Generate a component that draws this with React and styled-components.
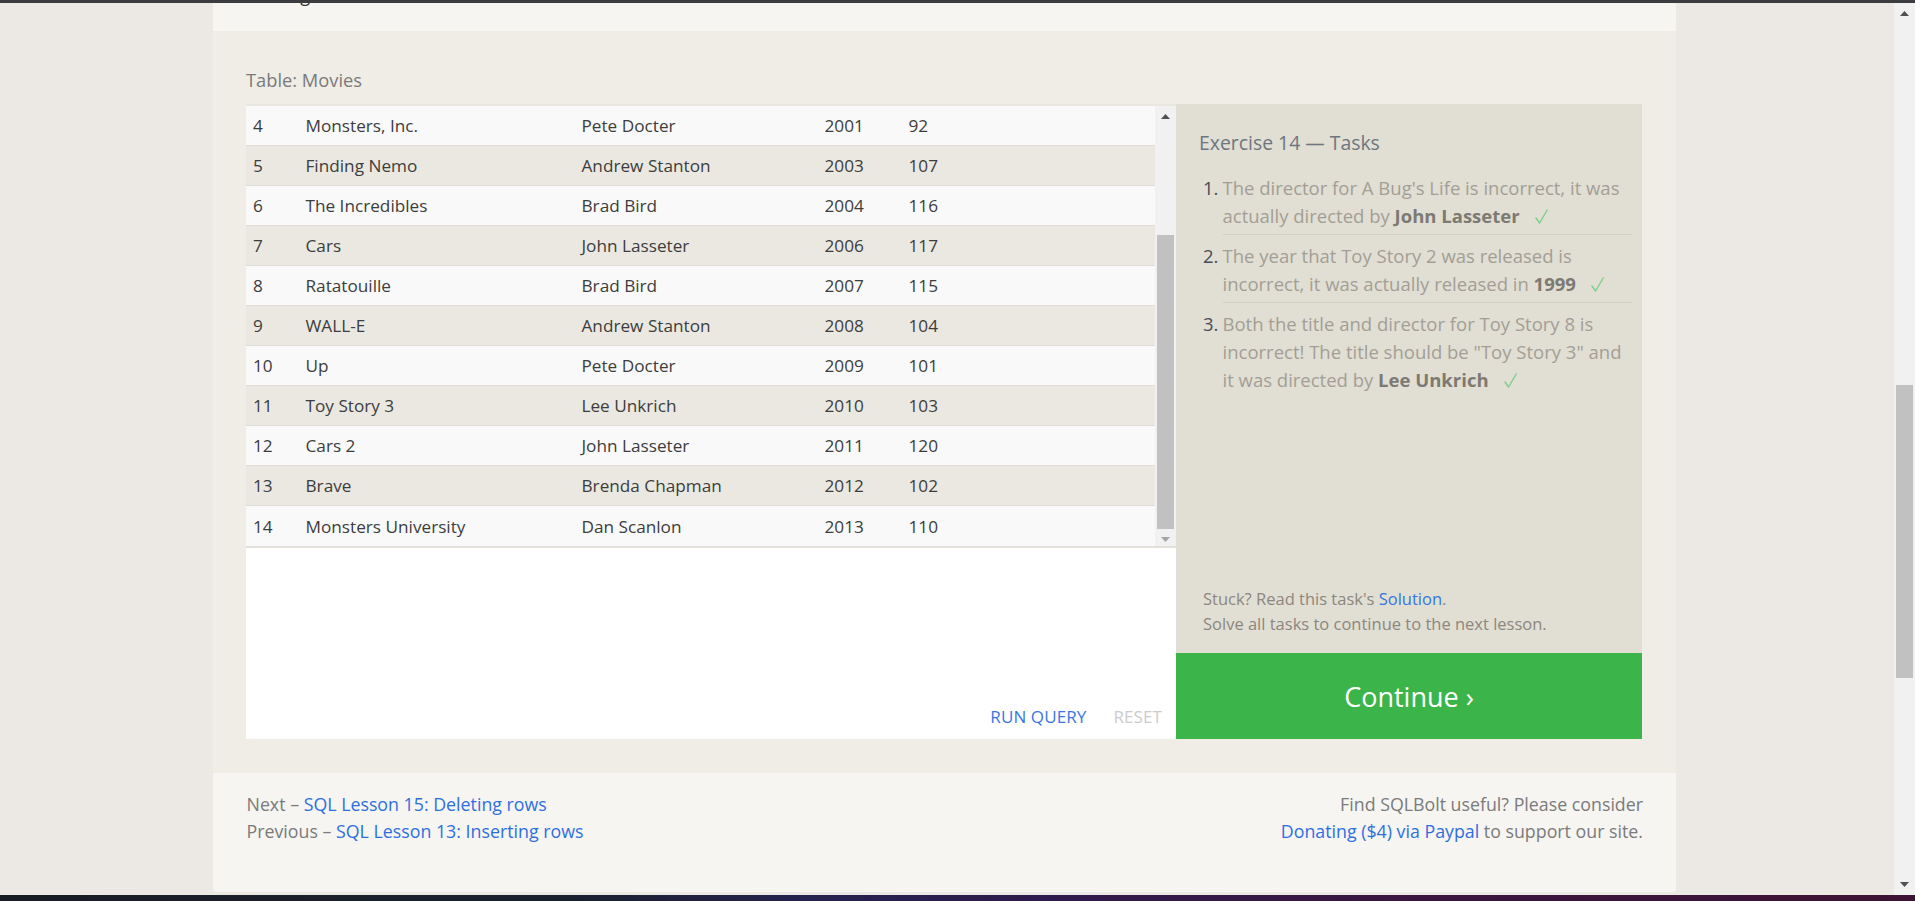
import React from "react";
import styled, { createGlobalStyle } from "styled-components";

const GlobalStyle = createGlobalStyle`
  html, body { margin: 0; padding: 0; overflow: hidden; }
  body { font-family: "Open Sans", "Noto Sans", sans-serif; }
  * { box-sizing: border-box; }
`;

const Screen = styled.div`
  width: 1915px;
  height: 901px;
  display: flex;
  flex-direction: column;
  background: #ece8e4;
`;

const TopBar = styled.div`
  height: 3px;
  background: #3b3c40;
  flex: none;
`;

const Taskbar = styled.div`
  height: 6px;
  flex: none;
  background: linear-gradient(90deg, #181d24 0%, #1a2030 30%, #24224e 42%, #2f1a4c 55%, #3b1540 75%, #3d1234 100%);
`;

const Viewport = styled.div`
  flex: 1;
  display: flex;
  min-height: 0;
`;

const Page = styled.div`
  flex: 1;
  padding-left: 213px;
  overflow: hidden;
  background: #ece8e4;
`;

const Container = styled.div`
  width: 1463px;
  display: flex;
  flex-direction: column;
`;

const LessonTail = styled.div`
  height: 28px;
  background: #f6f5f1;
  overflow: hidden;
  padding-left: 33px;
`;

const CutText = styled.p`
  margin: -22px 0 0;
  font-size: 18px;
  line-height: 28px;
  color: #333;
`;

const Exercise = styled.section`
  height: 742px;
  background: #efede6;
  border-radius: 4px;
  padding: 37px 34px 34px 33px;
  display: flex;
  flex-direction: column;
`;

const TableLabel = styled.div`
  font-size: 18.3px;
  line-height: 24px;
  color: #7a7a7a;
  margin-bottom: 12px;
`;

const Workspace = styled.div`
  display: flex;
  height: 635px;
`;

const Editor = styled.div`
  width: 930px;
  background: #ffffff;
  display: flex;
  flex-direction: column;
`;

const TableScroller = styled.div`
  height: 444px;
  display: flex;
  border-top: 2px solid #e9e7e0;
  border-bottom: 2px solid #e2e0d9;
`;

const Rows = styled.div`
  flex: 1;
  overflow: hidden;
`;

const Row = styled.div`
  display: grid;
  grid-template-columns: 52.5px 276px 243px 84px 1fr;
  align-items: center;
  height: 40px;
  padding-left: 7px;
  border-bottom: 1px solid #dedcd5;
  background: ${(p) => (p.$shade ? "#eae8e1" : "#f9f9f9")};
  font-size: 17.2px;
  color: #3d3d3d;
  &:last-child { border-bottom: none; }
`;

const Cell = styled.span`
  white-space: nowrap;
`;

const ScrollBar = styled.div`
  width: 21px;
  flex: none;
  background: #f1f1f1;
  display: flex;
  flex-direction: column;
`;

const ArrowBtn = styled.div`
  height: 21px;
  flex: none;
  display: flex;
  align-items: center;
  justify-content: center;
`;

const Track = styled.div`
  flex: 1;
  display: flex;
  flex-direction: column;
`;

const Thumb = styled.div`
  margin: ${(p) => p.$offset}px 2px 0;
  height: ${(p) => p.$size}px;
  background: #c1c1c1;
  flex: none;
`;

const Actions = styled.div`
  flex: 1;
  display: flex;
  justify-content: flex-end;
  align-items: flex-end;
  gap: 27px;
  padding: 0 14px 10px 0;
`;

const ActionBtn = styled.span`
  font-size: 17px;
  line-height: 24px;
  color: ${(p) => (p.$disabled ? "#cccccc" : "#3a77e4")};
  letter-spacing: 0.1px;
`;

const TaskPanel = styled.aside`
  width: 466px;
  background: #e1ded3;
  display: flex;
  flex-direction: column;
`;

const TaskContent = styled.div`
  flex: 1;
  padding: 25px 10px 0 23px;
  display: flex;
  flex-direction: column;
`;

const TaskHeading = styled.h3`
  margin: 0;
  font-weight: 400;
  font-size: 19.4px;
  line-height: 28px;
  color: #6d7680;
`;

const TaskList = styled.ol`
  list-style: none;
  margin: 17px 0 0;
  padding: 0 0 0 4px;
`;

const TaskItem = styled.li`
  display: flex;
  margin-top: ${(p) => (p.$sep ? "4px" : "0")};
  font-size: 18.5px;
  line-height: 28px;
`;

const TaskNum = styled.span`
  width: 19.5px;
  flex: none;
  color: #474d59;
  padding-top: ${(p) => (p.$sep ? "8px" : "0")};
`;

const TaskBody = styled.div`
  flex: 1;
  color: #a39e96;
  border-top: ${(p) => (p.$sep ? "1px solid #d2cfc4" : "none")};
  padding-top: ${(p) => (p.$sep ? "7px" : "0")};
`;

const Strong = styled.b`
  color: #7d7973;
  font-weight: 700;
`;

const Check = styled.svg`
  margin-left: 15px;
  vertical-align: -1px;
`;

const Stuck = styled.div`
  padding: 0 10px 17px 27px;
  font-size: 16.5px;
  line-height: 25px;
  color: #8c877f;
`;

const Link = styled.a`
  color: ${(p) => p.$color || "#3776e0"};
  text-decoration: none;
`;

const ContinueBtn = styled.div`
  height: 86px;
  flex: none;
  background: #3bb54a;
  color: #ffffff;
  font-size: 27px;
  display: flex;
  align-items: center;
  justify-content: center;
`;

const Footer = styled.footer`
  height: 119px;
  background: #f6f5f2;
  border-radius: 0 0 4px 4px;
  padding: 18px 33px 0 33.5px;
  display: flex;
  justify-content: space-between;
  font-size: 17.8px;
  line-height: 27px;
  color: #7b7b7b;
`;

const FooterCol = styled.div`
  text-align: ${(p) => (p.$right ? "right" : "left")};
`;

const Triangle = ({ up, color }) => (
  <svg width="9" height="5" viewBox="0 0 9 5">
    <path d={up ? "M0 5 L4.5 0 L9 5 Z" : "M0 0 L4.5 5 L9 0 Z"} fill={color} />
  </svg>
);

const CheckMark = () => (
  <Check width="13" height="15" viewBox="0 0 13 15">
    <path d="M1 9 L4.6 14 L12.2 1" fill="none" stroke="#7ccf89" strokeWidth="1.4" strokeLinecap="round" strokeLinejoin="round" />
  </Check>
);

const movies = [
  [4, "Monsters, Inc.", "Pete Docter", 2001, 92],
  [5, "Finding Nemo", "Andrew Stanton", 2003, 107],
  [6, "The Incredibles", "Brad Bird", 2004, 116],
  [7, "Cars", "John Lasseter", 2006, 117],
  [8, "Ratatouille", "Brad Bird", 2007, 115],
  [9, "WALL-E", "Andrew Stanton", 2008, 104],
  [10, "Up", "Pete Docter", 2009, 101],
  [11, "Toy Story 3", "Lee Unkrich", 2010, 103],
  [12, "Cars 2", "John Lasseter", 2011, 120],
  [13, "Brave", "Brenda Chapman", 2012, 102],
  [14, "Monsters University", "Dan Scanlon", 2013, 110],
];

const tasks = [
  <>The director for A Bug's Life is incorrect, it was actually directed by <Strong>John Lasseter</Strong><CheckMark /></>,
  <>The year that Toy Story 2 was released is incorrect, it was actually released in <Strong>1999</Strong><CheckMark /></>,
  <>Both the title and director for Toy Story 8 is incorrect! The title should be "Toy Story 3" and it was directed by <Strong>Lee Unkrich</Strong><CheckMark /></>,
];

export default function App() {
  return (
    <>
      <GlobalStyle />
      <Screen>
        <TopBar />
        <Viewport>
          <Page>
            <Container>
              <LessonTail>
                <CutText>starting.</CutText>
              </LessonTail>
              <Exercise>
                <TableLabel>Table: Movies</TableLabel>
                <Workspace>
                  <Editor>
                    <TableScroller>
                      <Rows>
                        {movies.map((m, i) => (
                          <Row key={m[0]} $shade={i % 2 === 1}>
                            {m.map((v, j) => (
                              <Cell key={j}>{v}</Cell>
                            ))}
                          </Row>
                        ))}
                      </Rows>
                      <ScrollBar>
                        <ArrowBtn><Triangle up color="#505050" /></ArrowBtn>
                        <Track><Thumb $offset={108} $size={294} /></Track>
                        <ArrowBtn><Triangle color="#a3a3a3" /></ArrowBtn>
                      </ScrollBar>
                    </TableScroller>
                    <Actions>
                      <ActionBtn>RUN QUERY</ActionBtn>
                      <ActionBtn $disabled>RESET</ActionBtn>
                    </Actions>
                  </Editor>
                  <TaskPanel>
                    <TaskContent>
                      <TaskHeading>Exercise 14 — Tasks</TaskHeading>
                      <TaskList>
                        {tasks.map((t, i) => (
                          <TaskItem key={i} $sep={i > 0}>
                            <TaskNum $sep={i > 0}>{i + 1}.</TaskNum>
                            <TaskBody $sep={i > 0}>{t}</TaskBody>
                          </TaskItem>
                        ))}
                      </TaskList>
                    </TaskContent>
                    <Stuck>
                      Stuck? Read this task's <Link href="#">Solution</Link>.
                      <br />
                      Solve all tasks to continue to the next lesson.
                    </Stuck>
                    <ContinueBtn>Continue ›</ContinueBtn>
                  </TaskPanel>
                </Workspace>
              </Exercise>
              <Footer>
                <FooterCol>
                  Next – <Link href="#" $color="#2e6fe0">SQL Lesson 15: Deleting rows</Link>
                  <br />
                  Previous – <Link href="#" $color="#2e6fe0">SQL Lesson 13: Inserting rows</Link>
                </FooterCol>
                <FooterCol $right>
                  Find SQLBolt useful? Please consider
                  <br />
                  <Link href="#" $color="#2e6fe0">Donating ($4) via Paypal</Link> to support our site.
                </FooterCol>
              </Footer>
            </Container>
          </Page>
          <ScrollBar>
            <ArrowBtn><Triangle up color="#505050" /></ArrowBtn>
            <Track><Thumb $offset={361} $size={293} /></Track>
            <ArrowBtn><Triangle color="#505050" /></ArrowBtn>
          </ScrollBar>
        </Viewport>
        <Taskbar />
      </Screen>
    </>
  );
}
